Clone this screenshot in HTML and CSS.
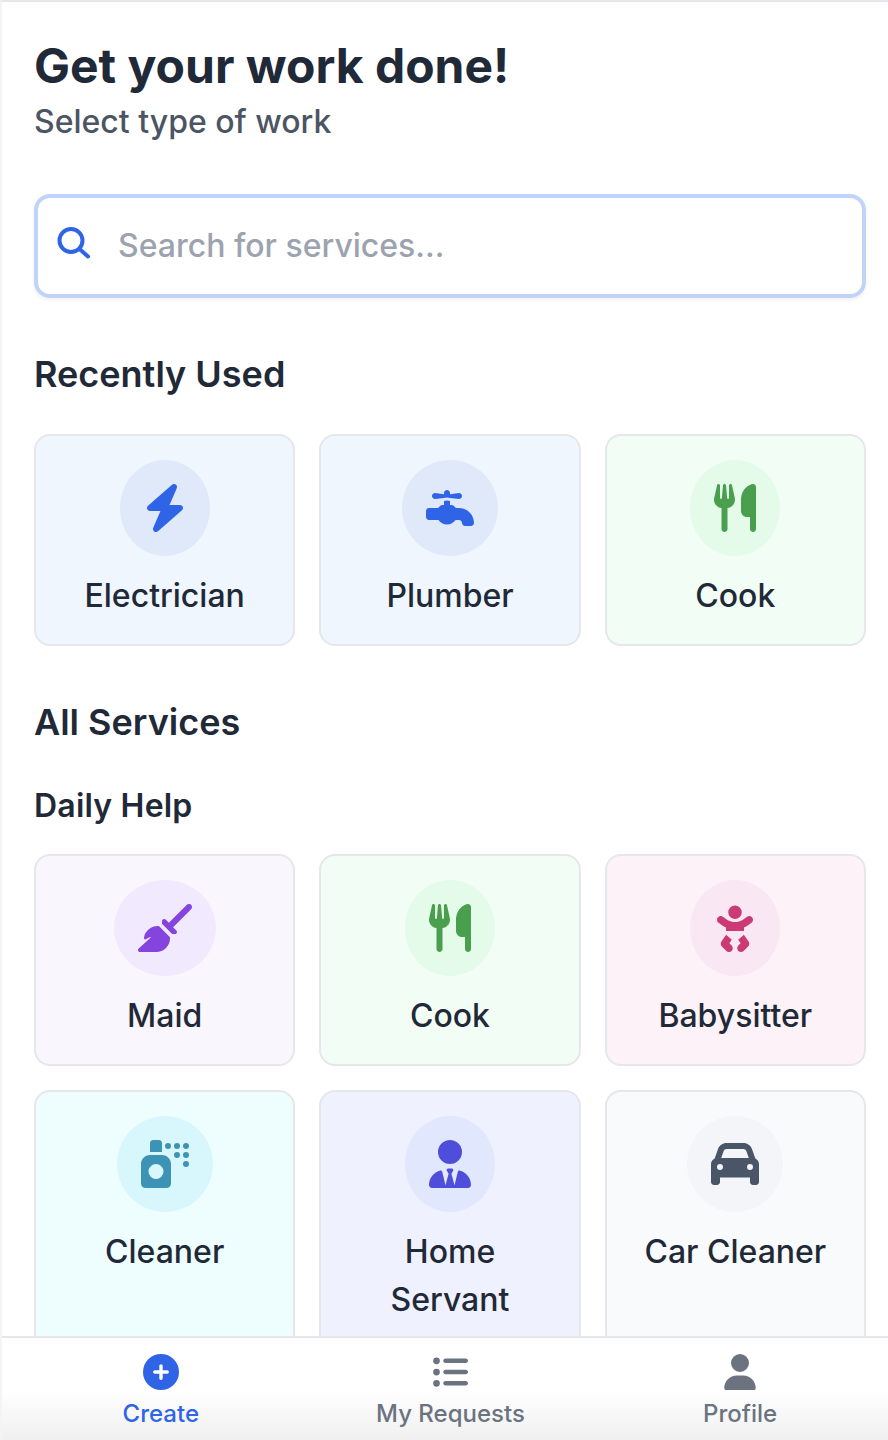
FILE: index.html
```html
<!doctype html>
<html lang="en">
<head>
    <meta charset="UTF-8">
    <meta name="viewport" content="width=device-width, initial-scale=1.0">
    <title>Get your work done</title>

    <link rel="stylesheet" href="styles.css">
</head>
<body>
    <svg xmlns="http://www.w3.org/2000/svg" class="sprite">
        <symbol id="bolt" viewBox="0 0 448 512"><path d="M349.4 44.6c5.9-13.7 1.5-29.7-10.6-38.5s-28.6-8-39.9 1.8l-256 224c-10 8.8-13.6 22.9-8.9 35.3S50.7 288 64 288H175.5L98.6 467.4c-5.9 13.7-1.5 29.7 10.6 38.5s28.6 8 39.9-1.8l256-224c10-8.8 13.6-22.9 8.9-35.3s-18-20.4-31.3-20.4H272.5L349.4 44.6z"/></symbol>
        <symbol id="faucet" viewBox="0 0 512 512"><path d="M192 96v12L96 96c-17.7 0-32 14.3-32 32s14.3 32 32 32l96-12 31-3.9 1-.1 1 .1 31 3.9 96 12c17.7 0 32-14.3 32-32s-14.3-32-32-32l-96 12V96c0-17.7-14.3-32-32-32s-32 14.3-32 32zM32 256c-17.7 0-32 14.3-32 32v64c0 17.7 14.3 32 32 32H132.1c20.2 29 53.9 48 91.9 48s71.7-19 91.9-48H352c17.7 0 32 14.3 32 32s14.3 32 32 32h64c17.7 0 32-14.3 32-32c0-88.4-71.6-160-160-160H320l-22.6-22.6c-6-6-14.1-9.4-22.6-9.4H256V180.2l-32-4-32 4V224H173.3c-8.5 0-16.6 3.4-22.6 9.4L128 256H32z"/></symbol>
        <symbol id="utensils" viewBox="0 0 448 512"><path d="M416 0C400 0 288 32 288 176V288c0 35.3 28.7 64 64 64h32V480c0 17.7 14.3 32 32 32s32-14.3 32-32V352 240 32c0-17.7-14.3-32-32-32zM64 16C64 7.8 57.9 1 49.7 .1S34.2 4.6 32.4 12.5L2.1 148.8C.7 155.1 0 161.5 0 167.9c0 45.9 35.1 83.6 80 87.7V480c0 17.7 14.3 32 32 32s32-14.3 32-32V255.6c44.9-4.1 80-41.8 80-87.7c0-6.4-.7-12.8-2.1-19.1L191.6 12.5c-1.8-8-9.3-13.3-17.4-12.4S160 7.8 160 16V150.2c0 5.4-4.4 9.8-9.8 9.8c-5.1 0-9.3-3.9-9.8-9L127.9 14.6C127.2 6.3 120.3 0 112 0s-15.2 6.3-15.9 14.6L83.7 151c-.5 5.1-4.7 9-9.8 9c-5.4 0-9.8-4.4-9.8-9.8V16zm48.3 152l-.3 0-.3 0 .3-.7 .3 .7z"/></symbol>
        <symbol id="broom" viewBox="0 0 576 512"><path d="M566.6 54.6c12.5-12.5 12.5-32.8 0-45.3s-32.8-12.5-45.3 0l-192 192-34.7-34.7c-4.2-4.2-10-6.6-16-6.6c-12.5 0-22.6 10.1-22.6 22.6v29.1L364.3 320h29.1c12.5 0 22.6-10.1 22.6-22.6c0-6-2.4-11.8-6.6-16l-34.7-34.7 192-192zM341.1 353.4L222.6 234.9c-42.7-3.7-85.2 11.7-115.8 42.3l-8 8C76.5 307.5 64 337.7 64 369.2c0 6.8 7.1 11.2 13.2 8.2l51.1-25.5c5-2.5 9.5 4.1 5.4 7.9L7.3 473.4C2.7 477.6 0 483.6 0 489.9C0 502.1 9.9 512 22.1 512l173.3 0c38.8 0 75.9-15.4 103.4-42.8c30.6-30.6 45.9-73.1 42.3-115.8z"/></symbol>
        <symbol id="baby" viewBox="0 0 448 512"><path d="M152 88a72 72 0 1 1 144 0A72 72 0 1 1 152 88zM39.7 144.5c13-17.9 38-21.8 55.9-8.8L131.8 162c26.8 19.5 59.1 30 92.2 30s65.4-10.5 92.2-30l36.2-26.4c17.9-13 42.9-9 55.9 8.8s9 42.9-8.8 55.9l-36.2 26.4c-13.6 9.9-28.1 18.2-43.3 25V288H128V251.7c-15.2-6.7-29.7-15.1-43.3-25L48.5 200.3c-17.9-13-21.8-38-8.8-55.9zm89.8 184.8l60.6 53-26 37.2 24.3 24.3c15.6 15.6 15.6 40.9 0 56.6s-40.9 15.6-56.6 0l-48-48C70 438.6 68.1 417 79.2 401.1l50.2-71.8zm128.5 53l60.6-53 50.2 71.8c11.1 15.9 9.2 37.5-4.5 51.2l-48 48c-15.6 15.6-40.9 15.6-56.6 0s-15.6-40.9 0-56.6L284 419.4l-26-37.2z"/></symbol>
        <symbol id="spray" viewBox="0 0 512 512"><path d="M128 0h64c17.7 0 32 14.3 32 32v96H96V32c0-17.7 14.3-32 32-32zM0 256c0-53 43-96 96-96H224c53 0 96 43 96 96V464c0 26.5-21.5 48-48 48H48c-26.5 0-48-21.5-48-48V256zm240 80A80 80 0 1 0 80 336a80 80 0 1 0 160 0zM256 64a32 32 0 1 1 64 0 32 32 0 1 1 -64 0zM384 32a32 32 0 1 1 0 64 32 32 0 1 1 0-64zm64 32a32 32 0 1 1 64 0 32 32 0 1 1 -64 0zm32 64a32 32 0 1 1 0 64 32 32 0 1 1 0-64zM448 256a32 32 0 1 1 64 0 32 32 0 1 1 -64 0zM384 128a32 32 0 1 1 0 64 32 32 0 1 1 0-64z"/></symbol>
        <symbol id="user-tie" viewBox="0 0 448 512"><path d="M96 128a128 128 0 1 0 256 0A128 128 0 1 0 96 128zm94.5 200.2l18.6 31L175.8 483.1l-36-146.9c-2-8.1-9.8-13.4-17.9-11.3C51.9 342.4 0 405.8 0 481.3c0 17 13.8 30.7 30.7 30.7H162.5c0 0 0 0 .1 0H168 280h5.5c0 0 0 0 .1 0H417.3c17 0 30.7-13.8 30.7-30.7c0-75.5-51.9-138.9-121.9-156.4c-8.1-2-15.9 3.3-17.9 11.3l-36 146.9L238.9 359.2l18.6-31c6.4-10.7-1.3-24.2-13.7-24.2H224 204.3c-12.4 0-20.1 13.6-13.7 24.2z"/></symbol>
        <symbol id="car" viewBox="0 0 512 512"><path d="M135.2 117.4L109.1 192H402.9l-26.1-74.6C372.3 104.6 360.2 96 346.6 96H165.4c-13.6 0-25.7 8.6-30.2 21.4zM39.6 196.8L74.8 96.3C88.3 57.8 124.6 32 165.4 32H346.6c40.8 0 77.1 25.8 90.6 64.3l35.2 100.5c23.2 9.6 39.6 32.5 39.6 59.2V400v48c0 17.7-14.3 32-32 32H448c-17.7 0-32-14.3-32-32V400H96v48c0 17.7-14.3 32-32 32H32c-17.7 0-32-14.3-32-32V400 256c0-26.7 16.4-49.6 39.6-59.2zM128 288a32 32 0 1 0 -64 0 32 32 0 1 0 64 0zm288 32a32 32 0 1 0 0-64 32 32 0 1 0 0 64z"/></symbol>
        <symbol id="circle-plus" viewBox="0 0 512 512"><path d="M256 512A256 256 0 1 0 256 0a256 256 0 1 0 0 512zM232 344V280H168c-13.3 0-24-10.7-24-24s10.7-24 24-24h64V168c0-13.3 10.7-24 24-24s24 10.7 24 24v64h64c13.3 0 24 10.7 24 24s-10.7 24-24 24H280v64c0 13.3-10.7 24-24 24s-24-10.7-24-24z"/></symbol>
        <symbol id="list" viewBox="0 0 512 512"><path d="M64 144a48 48 0 1 0 0-96 48 48 0 1 0 0 96zM192 64c-17.7 0-32 14.3-32 32s14.3 32 32 32H480c17.7 0 32-14.3 32-32s-14.3-32-32-32H192zm0 160c-17.7 0-32 14.3-32 32s14.3 32 32 32H480c17.7 0 32-14.3 32-32s-14.3-32-32-32H192zm0 160c-17.7 0-32 14.3-32 32s14.3 32 32 32H480c17.7 0 32-14.3 32-32s-14.3-32-32-32H192zM64 464a48 48 0 1 0 0-96 48 48 0 1 0 0 96zm48-208a48 48 0 1 0 -96 0 48 48 0 1 0 96 0z"/></symbol>
        <symbol id="user" viewBox="0 0 448 512"><path d="M224 256A128 128 0 1 0 224 0a128 128 0 1 0 0 256zm-45.7 48C79.8 304 0 383.8 0 482.3C0 498.7 13.3 512 29.7 512H418.3c16.4 0 29.7-13.3 29.7-29.7C448 383.8 368.2 304 269.7 304H178.3z"/></symbol>
    </svg>

    <div class="page">
        <main>
            <h1>Get your work done!</h1>
            <p class="subtitle">Select type of work</p>

            <div class="search">
                <svg class="search-icon" viewBox="0 0 32 32"><circle cx="13" cy="11.5" r="11.5"/><path d="M21.5 20l8.5 7.5"/></svg>
                <span class="placeholder">Search for services...</span>
            </div>

            <h2>Recently Used</h2>
            <div class="tiles">
                <div class="tile blue">
                    <span class="badge"><svg class="w42"><use href="#bolt"/></svg></span>
                    <span class="name">Electrician</span>
                </div>
                <div class="tile blue">
                    <span class="badge"><svg class="w48"><use href="#faucet"/></svg></span>
                    <span class="name">Plumber</span>
                </div>
                <div class="tile green">
                    <span class="badge"><svg class="w42"><use href="#utensils"/></svg></span>
                    <span class="name">Cook</span>
                </div>
            </div>

            <h2 class="all">All Services</h2>
            <h3>Daily Help</h3>
            <div class="tiles">
                <div class="tile purple">
                    <span class="badge"><svg class="w54"><use href="#broom"/></svg></span>
                    <span class="name">Maid</span>
                </div>
                <div class="tile green">
                    <span class="badge"><svg class="w42"><use href="#utensils"/></svg></span>
                    <span class="name">Cook</span>
                </div>
                <div class="tile pink">
                    <span class="badge"><svg class="w42"><use href="#baby"/></svg></span>
                    <span class="name">Babysitter</span>
                </div>
                <div class="tile cyan">
                    <span class="badge"><svg class="w48"><use href="#spray"/></svg></span>
                    <span class="name">Cleaner</span>
                </div>
                <div class="tile indigo">
                    <span class="badge"><svg class="w42"><use href="#user-tie"/></svg></span>
                    <span class="name">Home Servant</span>
                </div>
                <div class="tile gray">
                    <span class="badge"><svg class="w48"><use href="#car"/></svg></span>
                    <span class="name">Car Cleaner</span>
                </div>
            </div>
        </main>

        <nav class="tabbar">
            <a class="tab active"><svg class="tab-icon w36"><use href="#circle-plus"/></svg>Create</a>
            <a class="tab"><svg class="tab-icon w36"><use href="#list"/></svg>My Requests</a>
            <a class="tab"><svg class="tab-icon w32"><use href="#user"/></svg>Profile</a>
        </nav>
    </div>
</body>
</html>
```

FILE: styles.css
```css
:root {
    --cl-border: #e5e7eb;
    --cl-primary: #1f2937;
    --cl-muted: #4b5563;
    --cl-accent: #2f64e6;
}

html, body {
    font-family: 'Inter', sans-serif;
    color: var(--cl-primary);
    padding: 0;
    margin: 0;
}

.sprite {
    display: none;
}

.page {
    position: relative;
    height: 1440px;
    box-sizing: border-box;
    overflow: hidden;
    background: white;
    border-top: solid 2px var(--cl-border);
    border-left: solid 2px #f3f4f6;
}

main {
    padding: 32px 22px 0 32px;
}

h1 {
    font-size: 48px;
    line-height: 64px;
    font-weight: 700;
    margin: 0;
}

.subtitle {
    font-size: 32px;
    line-height: 48px;
    font-weight: 450;
    color: var(--cl-muted);
    margin: 0 0 48px;
}

.search {
    display: flex;
    align-items: center;
    height: 104px;
    box-sizing: border-box;
    padding: 0 20px 2px;
    gap: 28px;
    border: solid 4px #c0d3f8;
    border-radius: 16px;
    box-shadow: 0 2px 4px rgba(0, 0, 0, 0.06);
}

.search-icon {
    width: 32px;
    height: 32px;
    overflow: visible;
    fill: none;
    stroke: var(--cl-accent);
    stroke-width: 4;
    stroke-linecap: round;
}

.placeholder {
    font-size: 32px;
    font-weight: 450;
    color: #9ca3af;
}

h2 {
    font-size: 36px;
    line-height: 56px;
    font-weight: 600;
    margin: 48px 0 32px;
}

h3 {
    font-size: 32px;
    line-height: 48px;
    font-weight: 600;
    letter-spacing: 0.2px;
    margin: 0 0 24px;
}

.tiles {
    display: grid;
    grid-template-columns: repeat(3, 1fr);
    gap: 24px;
}

.tile {
    display: flex;
    flex-direction: column;
    align-items: center;
    padding: 24px;
    border: solid 2px var(--cl-border);
    border-radius: 16px;
    text-align: center;
}

.badge {
    display: flex;
    padding: 24px;
    border-radius: 50%;
    margin-bottom: 16px;
}

.badge svg {
    height: 48px;
    fill: currentColor;
}

.w32 { width: 32px; }
.w36 { width: 36px; }
.w42 { width: 42px; }
.w48 { width: 48px; }
.w54 { width: 54px; }

.name {
    font-size: 32px;
    line-height: 48px;
    font-weight: 500;
}

.blue { background: #eff6fe; }
.blue .badge { background: #dfe9fa; color: #2f64e6; }
.green { background: #f2fdf5; }
.green .badge { background: #e4fbea; color: #4a9f4f; }
.purple { background: #f9f6fe; }
.purple .badge { background: #f1e9fe; color: #8444dd; }
.pink { background: #fcf2f8; }
.pink .badge { background: #f9e8f4; color: #cc3a75; }
.cyan { background: #eefeff; }
.cyan .badge { background: #d8f7fc; color: #3d93b3; }
.indigo { background: #eff1fe; }
.indigo .badge { background: #e1e7fd; color: #4f4edb; }
.gray { background: #f9fafb; }
.gray .badge { background: #f3f5f9; color: #4a5568; }

.tabbar {
    position: absolute;
    left: 0;
    right: 0;
    bottom: 0;
    height: 104px;
    box-sizing: border-box;
    display: grid;
    grid-template-columns: repeat(3, 1fr);
    padding: 16px 3px 0 14px;
    border-top: solid 2px var(--cl-border);
    background: linear-gradient(white 50%, #f0f0f0);
}

.tab {
    display: flex;
    flex-direction: column;
    align-items: center;
    gap: 4px;
    font-size: 24px;
    line-height: 40px;
    font-weight: 500;
    color: #6b7280;
}

.tab.active {
    color: var(--cl-accent);
}

.tab-icon {
    height: 36px;
    fill: currentColor;
}
```
